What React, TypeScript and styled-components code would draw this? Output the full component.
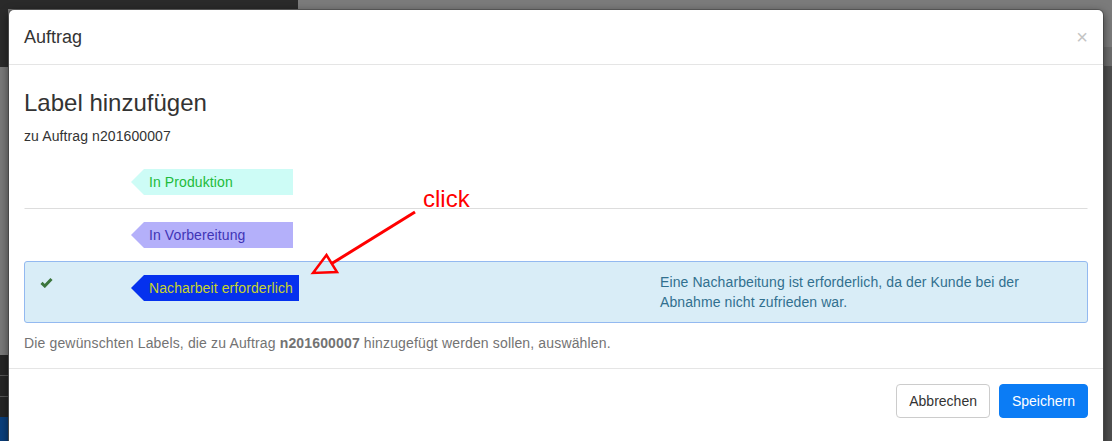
import styled, { createGlobalStyle } from 'styled-components';

type LabelType = {
    name: string;
    bg: string;
    color: string;
    selected?: boolean;
    description?: string;
};

const labels: LabelType[] = [
    { name: 'In Produktion', bg: '#cdfcf6', color: '#22bb3a' },
    { name: 'In Vorbereitung', bg: '#b4b0fa', color: '#4034b6' },
    {
        name: 'Nacharbeit erforderlich',
        bg: '#0531ee',
        color: '#c8d42a',
        selected: true,
        description: 'Eine Nacharbeitung ist erforderlich, da der Kunde bei der Abnahme nicht zufrieden war.',
    },
];

const GlobalStyle = createGlobalStyle`
    html, body {
        margin: 0;
        padding: 0;
    }
    body {
        font-family: "Liberation Sans", Arial, sans-serif;
        font-size: 14px;
        line-height: 20px;
        color: #333;
        background: #7b7b7b;
        overflow: hidden;
    }
`;

export default function App(): JSX.Element {
    return (
        <>
            <GlobalStyle />
            <Page>
                <Modal>
                    <ModalHeader>
                        <ModalTitle>Auftrag</ModalTitle>
                        <CloseButton type='button'>×</CloseButton>
                    </ModalHeader>
                    <ModalBody>
                        <Heading>Label hinzufügen</Heading>
                        <SubTitle>zu Auftrag n201600007</SubTitle>
                        <LabelList>
                            {labels.map((item, index) => (
                                <LabelRow key={index} selected={!!item.selected} divided={index === 1}>
                                    <CheckCell>
                                        {item.selected && (
                                            <svg width="13" height="11" viewBox="0 0 13 11">
                                                <path d="M1.5 5.8 L4.8 9 L11.5 2" fill="none" stroke="#3c763d" strokeWidth="3" />
                                            </svg>
                                        )}
                                    </CheckCell>
                                    <TagCell>
                                        <Tag bg={item.bg} fg={item.color}>{item.name}</Tag>
                                    </TagCell>
                                    <Description>{item.description}</Description>
                                </LabelRow>
                            ))}
                        </LabelList>
                        <HelpText>
                            Die gewünschten Labels, die zu Auftrag <b>n201600007</b> hinzugefügt werden sollen, auswählen.
                        </HelpText>
                    </ModalBody>
                    <ModalFooter>
                        <Button type='button'>Abbrechen</Button>
                        <Button type='button' primary>Speichern</Button>
                    </ModalFooter>
                </Modal>
                <Annotation width="1112" height="441" viewBox="0 0 1112 441">
                    <text x="423" y="207" fill="#ff0000" fontSize="24" fontFamily="Liberation Sans, Arial, sans-serif">click</text>
                    <line x1="415" y1="212" x2="331" y2="264" stroke="#ff0000" strokeWidth="3" />
                    <polygon points="313,273 326.5,255 337,272" fill="none" stroke="#ff0000" strokeWidth="2.5" strokeLinejoin="miter" />
                </Annotation>
            </Page>
        </>
    );
}

const Page = styled.div`
    position: relative;
    width: 1112px;
    height: 441px;
    overflow: hidden;
    box-sizing: border-box;
    padding: 9px 8px 0;
    background:
        linear-gradient(to right, #2a2a2a 0 298px, #7b7b7b 298px) left top / 100% 9px no-repeat,
        linear-gradient(to bottom, #2b2b2b 0 67px, #7a7a7a 67px 355px, #252525 355px 375px, #555 375px 376px, #252525 376px 396px, #555 396px 397px, #252525 397px 417px, #0b3f7c 417px) left top / 8px 100% no-repeat,
        linear-gradient(to bottom, #7b7b7b 0 47px, #6d6d6d 47px 66px, #4f4f4f 66px) right top / 8px 100% no-repeat,
        #7b7b7b;
`;

const Modal = styled.div`
    width: 100%;
    background: #fff;
    border: 1px solid rgba(0, 0, 0, 0.2);
    border-bottom: none;
    border-radius: 6px 6px 0 0;
    box-shadow: 0 3px 9px rgba(0, 0, 0, 0.5);
    box-sizing: border-box;
    background-clip: padding-box;
`;

const ModalHeader = styled.div`
    display: flex;
    justify-content: space-between;
    align-items: center;
    padding: 15px;
    border-bottom: 1px solid #e5e5e5;
`;

const ModalTitle = styled.h4`
    margin: 0;
    font-size: 18px;
    font-weight: normal;
    line-height: 24px;
    color: #333;
`;

const CloseButton = styled.button`
    background: none;
    border: none;
    padding: 0;
    font-family: "Liberation Sans", Arial, sans-serif;
    font-size: 20px;
    font-weight: normal;
    line-height: 1;
    color: #c4c4c4;
    cursor: pointer;
`;

const ModalBody = styled.div`
    padding: 15px;
`;

const Heading = styled.h3`
    margin: 10px 0 0;
    font-size: 24px;
    font-weight: normal;
    line-height: 26px;
    color: #333;
`;

const SubTitle = styled.p`
    margin: 10px 0 0;
    font-size: 14px;
    line-height: 20px;
    color: #333;
    letter-spacing: 0.1px;
`;

const LabelList = styled.div`
    margin-top: 9px;
`;

const LabelRow = styled.div<{ selected: boolean; divided: boolean }>`
    display: grid;
    grid-template-columns: 106px 529px 1fr;
    padding: 10px 0;
    border: 1px solid transparent;
    border-top-color: ${props => props.divided ? '#ddd' : 'transparent'};
    border-radius: ${props => props.selected ? '3px' : '0'};
    ${props => props.selected && `
        background-color: #d9edf7;
        border-color: #93b9f0;
    `}
`;

const CheckCell = styled.div`
    display: flex;
    align-items: center;
    height: 20px;
    padding-left: 15px;
`;

const TagCell = styled.div`
    padding: 3px 0 2px;
`;

const Tag = styled.span<{ bg: string; fg: string }>`
    position: relative;
    display: inline-block;
    box-sizing: border-box;
    min-width: 149px;
    height: 26px;
    line-height: 26px;
    margin-left: 13px;
    padding: 0 6px 0 5px;
    font-size: 14px;
    letter-spacing: 0.1px;
    background-color: ${props => props.bg};
    color: ${props => props.fg};

    &::before {
        content: "";
        position: absolute;
        left: -13px;
        top: 0;
        border-top: 13px solid transparent;
        border-bottom: 13px solid transparent;
        border-right: 13px solid ${props => props.bg};
    }
`;

const Description = styled.div`
    padding-right: 24px;
    color: #31708f;
    font-size: 14px;
    line-height: 20px;
    letter-spacing: 0.1px;
`;

const HelpText = styled.p`
    margin: 10px 0 0;
    color: #737373;
    font-size: 14px;
    line-height: 20px;
    letter-spacing: 0.15px;
`;

const ModalFooter = styled.div`
    display: flex;
    justify-content: flex-end;
    gap: 9px;
    padding: 15px;
    border-top: 1px solid #e5e5e5;
    height: 60px;
`;

const Button = styled.button<{ primary?: boolean }>`
    height: 34px;
    padding: 6px 12px;
    font-family: "Liberation Sans", Arial, sans-serif;
    font-size: 14px;
    line-height: 20px;
    border-radius: 4px;
    border: 1px solid ${props => props.primary ? '#0b7cf5' : '#ccc'};
    background-color: ${props => props.primary ? '#0b7cf5' : '#fff'};
    color: ${props => props.primary ? '#fff' : '#333'};
    cursor: pointer;
`;

const Annotation = styled.svg`
    position: absolute;
    left: 0;
    top: 0;
    pointer-events: none;
`;
